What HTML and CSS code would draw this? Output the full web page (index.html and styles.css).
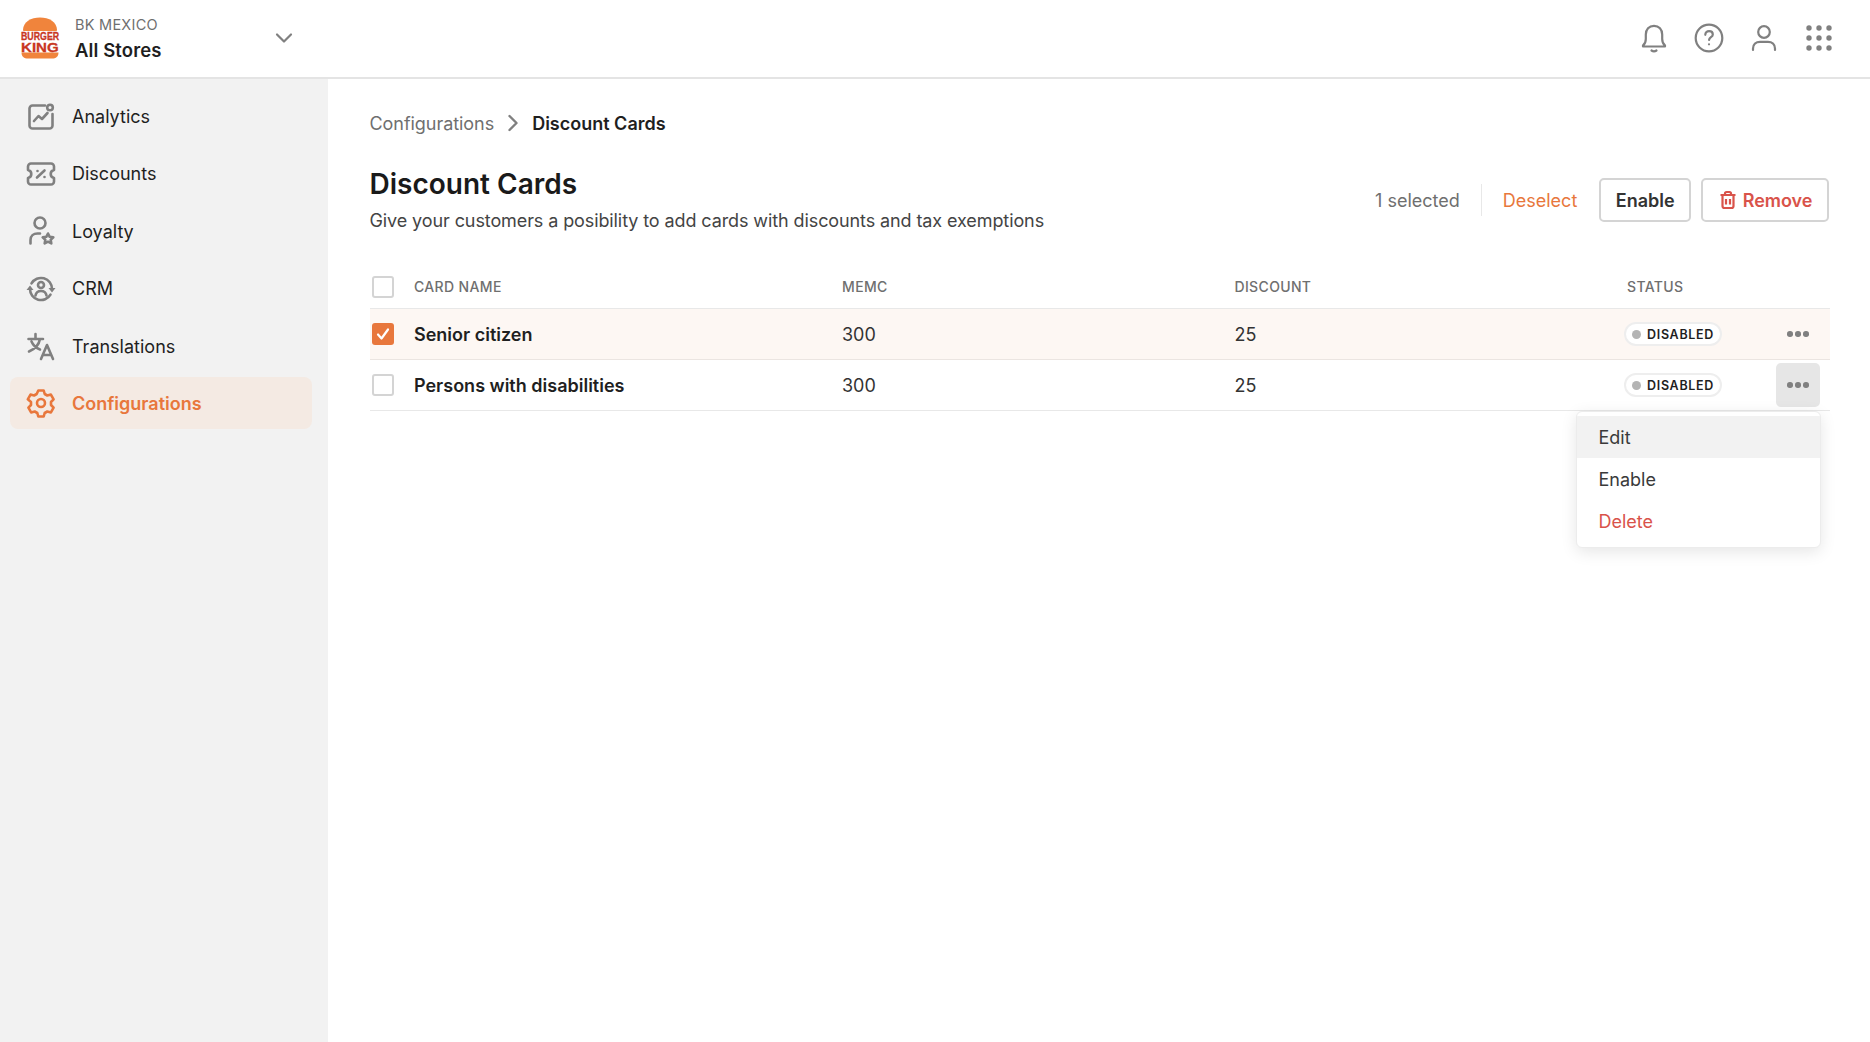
FILE: index.html
```html
<!DOCTYPE html>
<html lang="en">
<head>
<meta charset="utf-8">
<title>Discount Cards</title>
<link rel="stylesheet" href="styles.css">
</head>
<body>
<header class="topbar">
  <div class="brand">
    <svg class="logo" viewBox="0 0 40 42" width="40" height="42">
      <path d="M3 13C3 5 11 0.500 20 0.500S37 5 37 13c0 .6-.5 1-1 1H4c-.5 0-1-.4-1-1z" fill="#f0843c"/>
      <path d="M1.500 35.500h37c0 4-2.500 6-6.500 6H8c-4 0-6.500-2-6.500-6z" fill="#f0843c"/>
      <text class="logo-text logo-a" transform="translate(1 22.500) scale(.8 1)">BURGER</text>
      <text class="logo-text logo-b" transform="translate(1 34.500) scale(1.100 1)">KING</text>
    </svg>
    <div class="brand-text">
      <div class="brand-org">BK MEXICO</div>
      <div class="brand-store">All Stores</div>
    </div>
    <svg class="chev" viewBox="0 0 18 12" width="18" height="12"><path d="M2 2.500l7 7 7-7" fill="none" stroke="#808080" stroke-width="2.200" stroke-linecap="round" stroke-linejoin="round"/></svg>
  </div>
  <div class="top-icons">
    <svg viewBox="0 0 32 32" width="32" height="32" class="ti"><path d="M5 23.500c2-1.500 2.800-3.500 2.800-6.500v-4.500C7.800 7.500 11 3.800 16 3.800s8.200 3.700 8.200 8.700V17c0 3 .8 5 2.800 6.500v1H5z"/><path d="M13.500 28.500c1.500 1 3.500 1 5 0"/></svg>
    <svg viewBox="0 0 32 32" width="32" height="32" class="ti"><circle cx="16" cy="16" r="13.300"/><path d="M12.300 12.800c0-2.200 1.700-3.700 3.800-3.700s3.700 1.400 3.700 3.300c0 2.800-3.700 2.800-3.700 5.600"/><circle class="dot" cx="16" cy="22.300" r="1.100"/></svg>
    <svg viewBox="0 0 32 32" width="32" height="32" class="ti"><circle cx="16" cy="10" r="5.800"/><path d="M5 28v-1.500c0-4 3-6.700 7-6.700h8c4 0 7 2.700 7 6.700V28"/></svg>
    <svg viewBox="0 0 32 32" width="32" height="32" class="ti-grid">
      <circle cx="6" cy="6" r="2.700"/><circle cx="16" cy="6" r="2.700"/><circle cx="26" cy="6" r="2.700"/>
      <circle cx="6" cy="16" r="2.700"/><circle cx="16" cy="16" r="2.700"/><circle cx="26" cy="16" r="2.700"/>
      <circle cx="6" cy="26" r="2.700"/><circle cx="16" cy="26" r="2.700"/><circle cx="26" cy="26" r="2.700"/>
    </svg>
  </div>
</header>
<div class="shell">
  <nav class="sidebar">
    <a class="nav-item">
      <svg class="nav-icon" viewBox="0 0 30 30"><path d="M19 3.500H6.500a3 3 0 0 0-3 3v17a3 3 0 0 0 3 3h17a3 3 0 0 0 3-3V12"/><circle cx="24" cy="5.500" r="2.800"/><path d="M8 19l4.500-5 3.500 3 5.500-6"/></svg>
      <span>Analytics</span>
    </a>
    <a class="nav-item">
      <svg class="nav-icon" viewBox="0 0 30 30"><path d="M5 4.500h20a3 3 0 0 1 3 3v3.500c-2 .5-3.300 2-3.300 4s1.300 3.500 3.300 4v3.500a3 3 0 0 1-3 3H5a3 3 0 0 1-3-3V19c2-.5 3.300-2 3.300-4S4 11.500 2 11V7.500a3 3 0 0 1 3-3z"/><path d="M11 18.500l7.500-7"/><circle class="dot" cx="11.500" cy="12" r="1.300"/><circle class="dot" cx="18.500" cy="18" r="1.300"/></svg>
      <span>Discounts</span>
    </a>
    <a class="nav-item">
      <svg class="nav-icon" viewBox="0 0 30 30"><circle cx="14" cy="7" r="5.500"/><path d="M4.500 27.500V24c0-4 3-6.500 7-6.500h2.500"/><path d="M22 17.500l1.700 3.300 3.600.5-2.600 2.500.6 3.600-3.300-1.700-3.300 1.700.6-3.600-2.600-2.500 3.600-.5z"/></svg>
      <span>Loyalty</span>
    </a>
    <a class="nav-item">
      <svg class="nav-icon" viewBox="0 0 30 30"><path d="M5.500 9.400A11 11 0 0 1 26 15"/><path d="M24.500 20.600A11 11 0 0 1 4 15"/><path class="fill" d="M0.500 16h7l-3.500-4.500zM22.500 14h7L26 18.500z"/><circle cx="15" cy="11" r="3"/><path d="M9.500 21.500c.5-3 2.800-4.500 5.500-4.500s5 1.500 5.500 4.500"/></svg>
      <span>CRM</span>
    </a>
    <a class="nav-item">
      <svg class="nav-icon" viewBox="0 0 30 30"><path d="M2.500 8h14.500M9.500 3v5M14 8c-1 5.500-5 10-11 12.500M5.500 10.500c1.500 3.500 4.500 6.500 8.500 8"/><path d="M15 28l6-14 6 14M17 24h8"/></svg>
      <span>Translations</span>
    </a>
    <a class="nav-item active">
      <svg class="nav-icon" viewBox="0 0 30 30"><path d="M12.300 2.500h5.400l1 3.500 2.600 1.500 3.600-.9 2.700 4.700-2.600 2.700v3l2.600 2.700-2.700 4.700-3.600-.9-2.600 1.500-1 3.500h-5.400l-1-3.500-2.600-1.500-3.600.9-2.700-4.700 2.600-2.700v-3L1.800 11.300l2.700-4.700 3.600.9 2.600-1.500z"/><circle cx="15" cy="15" r="4"/></svg>
      <span>Configurations</span>
    </a>
  </nav>
  <main class="content">
    <div class="crumbs">
      <span class="crumb">Configurations</span>
      <svg class="crumb-sep" viewBox="0 0 12 18" width="12" height="18"><path d="M2.500 2l7 7-7 7" fill="none" stroke="#808080" stroke-width="2.400" stroke-linecap="round" stroke-linejoin="round"/></svg>
      <span class="crumb-current">Discount Cards</span>
    </div>
    <div class="page-head">
      <div>
        <h1>Discount Cards</h1>
        <p>Give your customers a posibility to add cards with discounts and tax exemptions</p>
      </div>
      <div class="actions">
        <span class="sel-count">1 selected</span>
        <span class="divider"></span>
        <span class="deselect">Deselect</span>
        <button class="btn">Enable</button>
        <button class="btn btn-danger">
          <svg viewBox="0 0 20 20" width="20" height="20"><path d="M2.500 5h15M7 5V3.500A1.500 1.500 0 0 1 8.500 2h3A1.500 1.500 0 0 1 13 3.500V5M4.500 5h11v11a2 2 0 0 1-2 2h-7a2 2 0 0 1-2-2zM8 9v5.500M12 9v5.500" fill="none" stroke="#d9534a" stroke-width="2.200" stroke-linejoin="round"/></svg>
          Remove
        </button>
      </div>
    </div>
    <div class="table">
      <div class="row head">
        <span class="check"></span><span>CARD NAME</span><span>MEMC</span><span>DISCOUNT</span><span>STATUS</span><span></span>
      </div>
      <div class="row selected">
        <span class="check on"><svg viewBox="0 0 20 20" width="20" height="20"><path d="M5 10.500l3.500 4L15 5.500" fill="none" stroke="#fff" stroke-width="2.200" stroke-linecap="round" stroke-linejoin="round"/></svg></span>
        <span class="name">Senior citizen</span><span>300</span><span>25</span>
        <span class="pill-cell"><span class="pill"><i></i>DISABLED</span></span>
        <span class="more"><b></b><b></b><b></b></span>
      </div>
      <div class="row">
        <span class="check"></span>
        <span class="name">Persons with disabilities</span><span>300</span><span>25</span>
        <span class="pill-cell"><span class="pill"><i></i>DISABLED</span></span>
        <span class="more open"><b></b><b></b><b></b></span>
      </div>
      <div class="menu">
        <div class="menu-item hover">Edit</div>
        <div class="menu-item">Enable</div>
        <div class="menu-item danger">Delete</div>
      </div>
    </div>
  </main>
</div>
</body>
</html>
```
FILE: styles.css
```css
* { box-sizing: border-box; }
html, body { margin: 0; height: 100%; }
body { font-family: Inter, "Liberation Sans", sans-serif; color: #1f1f1f; background: #fff; overflow: hidden; }
.topbar { height: 79px; display: flex; justify-content: space-between; align-items: center; border-bottom: 2px solid #e4e4e4; padding: 0 35px 1px 20px; background: #fff; }
.brand { width: 273px; display: flex; align-items: center; }
.logo { flex: none; }
.logo-text { font-family: "Liberation Sans", sans-serif; font-weight: 700; fill: #c8361f; stroke: #c8361f; stroke-width: 0.3px; }
.logo-a { font-size: 11px; }
.logo-b { font-size: 13.700px; }
.brand-text { margin-left: 15px; flex: 1; }
.brand-org { font-size: 14.500px; line-height: 18px; color: #6f6f6f; margin-bottom: 5px; letter-spacing: 0.25px; }
.brand-store { font-size: 18.500px; line-height: 22px; font-weight: 600; letter-spacing: 0.1px; }
.chev { flex: none; }
.top-icons { display: flex; gap: 23px; }
.ti { fill: none; stroke: #808080; stroke-width: 2.200; stroke-linecap: round; stroke-linejoin: round; }
.ti .dot { fill: #808080; stroke: none; }
.ti-grid { fill: #808080; }
.shell { display: flex; height: calc(100vh - 79px); }
.sidebar { width: 328px; flex: none; background: #f2f2f2; padding: 11.500px 16px 0 10px; display: flex; flex-direction: column; gap: 5.400px; }
.nav-item { height: 52px; display: flex; align-items: center; gap: 16px; padding-left: 16px; border-radius: 8px; font-size: 18px; color: #1f1f1f; }
.nav-icon { width: 30px; height: 30px; flex: none; fill: none; stroke: #808080; stroke-width: 2.600; stroke-linecap: round; stroke-linejoin: round; }
.nav-icon .dot, .nav-icon .fill { fill: #808080; stroke: none; }
.nav-item.active { background: #f4eae3; color: #e8773c; font-weight: 600; }
.active .nav-icon { stroke: #e8773c; }
.content { flex: 1; padding: 32px 40px 0 41.500px; min-width: 0; }
.crumbs { display: flex; align-items: center; height: 24px; font-size: 18px; }
.crumb { color: #6f6f6f; letter-spacing: -0.05px; }
.crumb-sep { margin: 0 13px 0 13px; }
.crumb-current { font-weight: 600; }
.page-head { display: flex; justify-content: space-between; margin-top: 31px; padding-right: 1px; }
h1 { margin: 0; font-size: 28px; line-height: 36px; font-weight: 600; color: #1a1a1a; }
.page-head p { margin: 7px 0 0; font-size: 18px; line-height: 24px; color: #444; letter-spacing: -0.1px; }
.actions { display: flex; align-items: center; height: 44px; margin-top: 12px; font-size: 18px; }
.sel-count { color: #6f6f6f; }
.divider { width: 1px; height: 32px; background: #e8e8e8; margin: 0 21px; }
.deselect { color: #e8773c; margin-right: 22px; }
.btn { height: 44px; padding: 0 14.500px; border: 2px solid #d4d4d4; border-radius: 5px; background: #fff; font: 600 18px Inter, sans-serif; color: #333; display: flex; align-items: center; gap: 5px; }
.btn-danger { margin-left: 10px; color: #d9534a; }
.table { position: relative; margin-top: 31.500px; font-size: 18px; }
.row { display: grid; grid-template-columns: 44.500px 428px 392.500px 392.500px 1fr 62px; align-items: center; height: 51px; padding-top: 1px; border-bottom: 1px solid #e8e8e8; color: #333; }
.row.head { height: 44px; font-size: 14px; font-weight: 500; letter-spacing: 0.35px; color: #6f6f6f; }
.row.selected { background: #fdf7f3; border-bottom-color: #ebe5e1; }
.check { display: block; width: 22px; height: 22px; margin-left: 2px; border: 2px solid #d4d4d4; border-radius: 3px; background: #fff; }
.check.on { background: #e8773c; border: 0; padding: 1px; }
.check svg { display: block; }
.name { font-weight: 600; color: #1f1f1f; }
.pill-cell { margin-left: -3px; }
.pill { display: inline-flex; align-items: center; height: 24px; padding: 0 6px; gap: 6px; border: 2px solid #eeeeee; border-radius: 12px; background: #fff; font-size: 12.500px; font-weight: 600; letter-spacing: 0.7px; color: #1f1f1f; }
.pill i { width: 9px; height: 9px; border-radius: 50%; background: #b4b4b4; }
.more { width: 44px; height: 44px; margin-left: 8px; display: flex; align-items: center; justify-content: center; gap: 2.500px; border-radius: 5px; }
.more b { width: 5.500px; height: 5.500px; border-radius: 50%; background: #808080; }
.more.open { background: #e6e6e6; }
.menu { position: absolute; left: 1206.500px; top: 146.500px; width: 244.500px; height: 137px; padding-top: 4px; background: #fff; border: 1px solid #ececec; border-radius: 6px; box-shadow: 0 4px 16px rgba(0,0,0,.1); overflow: hidden; }
.menu-item { height: 42px; display: flex; align-items: center; padding-left: 21.500px; font-size: 18px; color: #3a3a3a; }
.menu-item.hover { background: #f2f2f2; }
.menu-item.danger { color: #d9534a; }
```
